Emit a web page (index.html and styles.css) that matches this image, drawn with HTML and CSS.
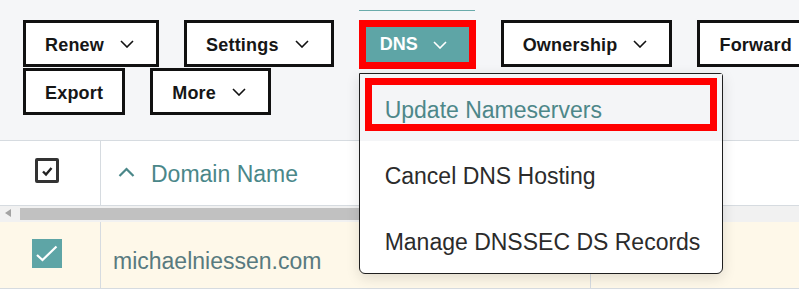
FILE: index.html
```html
<!DOCTYPE html>
<html lang="en">
<head>
  <meta charset="UTF-8">
  <title>Domains</title>
  <link rel="stylesheet" href="styles.css">
</head>
<body>
  <!-- 操作按钮 -->
  <div class="toolbar">
    <div class="btn-row btn-row-top">
      <button class="btn">Renew <svg class="chev" viewBox="0 0 14 8"><polyline points="1,1 7,7 13,1"/></svg></button>
      <button class="btn">Settings <svg class="chev" viewBox="0 0 14 8"><polyline points="1,1 7,7 13,1"/></svg></button>
      <div class="dns-wrap">
        <button class="btn btn-dns">DNS <svg class="chev" viewBox="0 0 14 8"><polyline points="1,1 7,7 13,1"/></svg></button>
        <!-- 下拉菜单 -->
        <div class="menu">
          <div class="menu-item menu-item-active">
            Update Nameservers
            <span class="mark"></span>
          </div>
          <div class="menu-item">Cancel DNS Hosting</div>
          <div class="menu-item">Manage DNSSEC DS Records</div>
        </div>
      </div>
      <button class="btn">Ownership <svg class="chev" viewBox="0 0 14 8"><polyline points="1,1 7,7 13,1"/></svg></button>
      <button class="btn">Forward</button>
    </div>
    <div class="btn-row">
      <button class="btn">Export</button>
      <button class="btn">More <svg class="chev" viewBox="0 0 14 8"><polyline points="1,1 7,7 13,1"/></svg></button>
    </div>
  </div>

  <!-- 域名表格 -->
  <div class="grid">
    <div class="grid-head">
      <div class="cell cell-check">
        <span class="box box-head">
          <svg viewBox="0 0 18 18"><polyline points="5,9.5 8,12.5 13.5,6"/></svg>
        </span>
      </div>
      <div class="cell cell-name head-name">
        <svg class="sort" viewBox="0 0 17 10"><polyline points="1.5,9 8.5,2 15.5,9"/></svg>
        Domain Name
      </div>
      <div class="cell cell-rest"></div>
    </div>
    <div class="hscroll">
      <span class="hscroll-arrow"></span>
      <span class="hscroll-thumb"></span>
    </div>
    <div class="grid-row">
      <div class="cell cell-check">
        <span class="box box-on">
          <svg viewBox="0 0 30 29"><polyline points="5,16 10.5,21 24.5,7.5"/></svg>
        </span>
      </div>
      <div class="cell cell-name row-name">michaelniessen.com</div>
      <div class="cell cell-rest"></div>
    </div>
  </div>
</body>
</html>
```

FILE: styles.css
```css
/* 全局样式 */
* {
  margin: 0;
  padding: 0;
  box-sizing: border-box;
  font-family: "Liberation Sans", Arial, sans-serif;
}

body {
  background-color: #fff;
  overflow: hidden;
  width: 799px;
  height: 291px;
}

/* 操作按钮 */
.toolbar {
  height: 140px;
  padding: 20px 0 0 23px;
  background-color: #f5f6f8;
}

.btn-row {
  display: flex;
  gap: 25px;
  align-items: flex-start;
  white-space: nowrap;
}

.btn-row-top {
  height: 48px;
}

.btn {
  display: flex;
  align-items: center;
  flex-shrink: 0;
  height: 47px;
  padding: 4px 19px 0;
  background-color: #fff;
  border: 3px solid #111;
  font-size: 18px;
  font-weight: bold;
  letter-spacing: 0.2px;
  color: #161616;
}

.chev {
  width: 14px;
  height: 8px;
  margin: -4px 3px 0 16px;
  fill: none;
  stroke: #111;
  stroke-width: 1.6;
}

.dns-wrap {
  position: relative;
}

/* 红框标注 */
.btn-dns {
  height: 49px;
  padding: 0 22px 0 14px;
  border: 7px solid #ff0000;
  background-color: #5ea5a6;
  color: #fff;
  letter-spacing: 0;
}

.btn-dns::before {
  content: "";
  position: absolute;
  top: -10px;
  left: 0;
  width: 116px;
  height: 1px;
  background-color: #6aabab;
}

.btn-dns .chev {
  margin: 0 0 0 15px;
  stroke: #fff;
}

/* 下拉菜单 */
.menu {
  position: absolute;
  top: 53px;
  left: 0;
  width: 364px;
  background-color: #fff;
  border: 1px solid #1f1f1f;
  border-radius: 0 3px 6px 6px;
  box-shadow: 0 4px 14px rgba(0, 0, 0, 0.12);
  z-index: 10;
}

.menu-item {
  position: relative;
  display: flex;
  align-items: center;
  height: 65px;
  padding: 5px 0 0 25px;
  font-size: 23px;
  color: #2b2b2b;
}

.menu-item:last-child {
  height: 67px;
}

.menu-item-active {
  height: 67px;
  background-color: #f4f5f7;
  color: #4d8789;
}

.mark {
  position: absolute;
  top: 4px;
  left: 5px;
  width: 352px;
  height: 53px;
  border: 7px solid #ff0000;
}

/* 表格 */
.grid {
  border-top: 1px solid #d6dbe0;
}

.grid-head,
.grid-row {
  display: flex;
  background-color: #fff;
}

.grid-head {
  height: 65px;
  border-bottom: 1px solid #d6dbe0;
}

.grid-row {
  height: 67px;
  background-color: #fef8e9;
  border-bottom: 1px solid #d6dbe0;
}

.cell {
  display: flex;
  align-items: center;
  border-right: 1px solid #d6dbe0;
}

.cell-check {
  width: 101px;
  padding-left: 35px;
}

.cell-name {
  width: 490px;
  font-size: 23px;
}

.cell-rest {
  flex: 1;
  border-right: none;
}

.head-name {
  padding: 3px 0 0 17px;
  color: #4a8789;
}

.sort {
  width: 17px;
  height: 10px;
  margin: -5px 16px 0 0;
  fill: none;
  stroke: #4a8789;
  stroke-width: 2.2;
}

.row-name {
  align-items: flex-end;
  padding: 0 0 13px 12px;
  color: #587a7f;
}

.box {
  display: flex;
  align-items: center;
  justify-content: center;
}

.box-head {
  width: 24px;
  height: 25px;
  margin-top: -5px;
  border: 3px solid #333;
  border-radius: 2px;
}

.box-head svg {
  width: 18px;
  height: 18px;
  fill: none;
  stroke: #222;
  stroke-width: 2.4;
}

.box-on {
  width: 30px;
  height: 29px;
  margin: -3px 0 0 -3px;
  background-color: #5ea5a6;
}

.box-on svg {
  width: 30px;
  height: 29px;
  fill: none;
  stroke: #fff;
  stroke-width: 2.2;
}

/* 横向滚动条 */
.hscroll {
  display: flex;
  align-items: center;
  height: 16px;
  background-color: #f1f1f1;
}

.hscroll-arrow {
  width: 0;
  height: 0;
  margin: -2px 9px 0 5px;
  border-top: 4px solid transparent;
  border-bottom: 4px solid transparent;
  border-right: 6px solid #a3a3a3;
}

.hscroll-thumb {
  width: 600px;
  height: 12px;
  background-color: #c1c1c1;
}
```
